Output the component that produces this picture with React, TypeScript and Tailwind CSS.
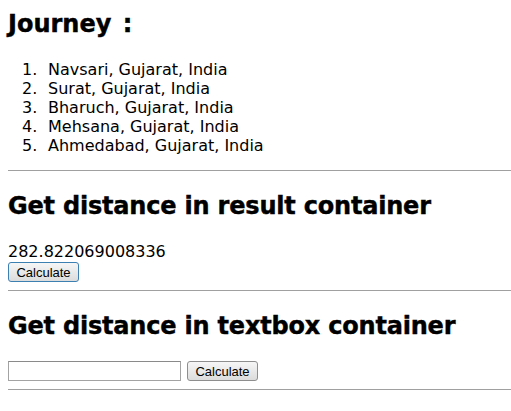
import { useState } from 'react'

const STOPS = [
  'Navsari, Gujarat, India',
  'Surat, Gujarat, India',
  'Bharuch, Gujarat, India',
  'Mehsana, Gujarat, India',
  'Ahmedabad, Gujarat, India',
]

const font = "font-['DejaVu_Sans',Verdana,sans-serif]"
const heading = 'ml-2 text-[24px] font-bold leading-[29px] [-webkit-text-stroke:0.4px_black]'

function Rule() {
  return <div className="ml-2 h-0 border-t border-[#a0a0a0]" />
}

function CalcButton({ focused, onClick }: { focused?: boolean; onClick?: () => void }) {
  return (
    <button
      onClick={onClick}
      className={`h-5 w-[71px] rounded-[3px] border bg-gradient-to-b from-[#f6f6f6] to-[#dcdcdc] text-[13px] leading-none text-black font-['Liberation_Sans',Arial,sans-serif] ${
        focused ? 'border-[#3c7fb1]' : 'border-[#8e8e8e]'
      }`}
    >
      Calculate
    </button>
  )
}

export default function App() {
  const [distance] = useState('282.822069008336')
  const [text, setText] = useState('')

  return (
    <div className={`bg-white text-black text-[16px] leading-[19px] ${font}`}>
      {/* Journey */}
      <h2 className={`${heading} pt-[10px] [word-spacing:3px]`}>Journey :</h2>
      <ol className="mt-[21px] pl-[22px]">
        {STOPS.map((s, i) => (
          <li key={s} className="flex">
            <span className="w-[26px] shrink-0">{i + 1}.</span>
            <span>{s}</span>
          </li>
        ))}
      </ol>
      <div className="mt-[15px]">
        <Rule />
      </div>

      {/* Result container */}
      <h2 className={`${heading} mt-[21px] tracking-[-0.2px]`}>Get distance in result container</h2>
      <div className="ml-2 mt-[21px]">{distance}</div>
      <div className="ml-2 flex pt-px">
        <CalcButton focused />
      </div>
      <div className="mt-[8px]">
        <Rule />
      </div>

      {/* Textbox container */}
      <h2 className={`${heading} mt-[21px] tracking-[-0.2px]`}>Get distance in textbox container</h2>
      <div className="ml-2 mt-[20px] flex items-center gap-[6px]">
        <input
          value={text}
          onChange={(e) => setText(e.target.value)}
          className="h-5 w-[173px] border border-[#a3a3a3] border-t-[#8a8a8a] bg-white px-1 text-[13px] outline-none"
        />
        <CalcButton onClick={() => setText(distance)} />
      </div>
      <div className="mt-[8px] pb-5">
        <Rule />
      </div>
    </div>
  )
}
